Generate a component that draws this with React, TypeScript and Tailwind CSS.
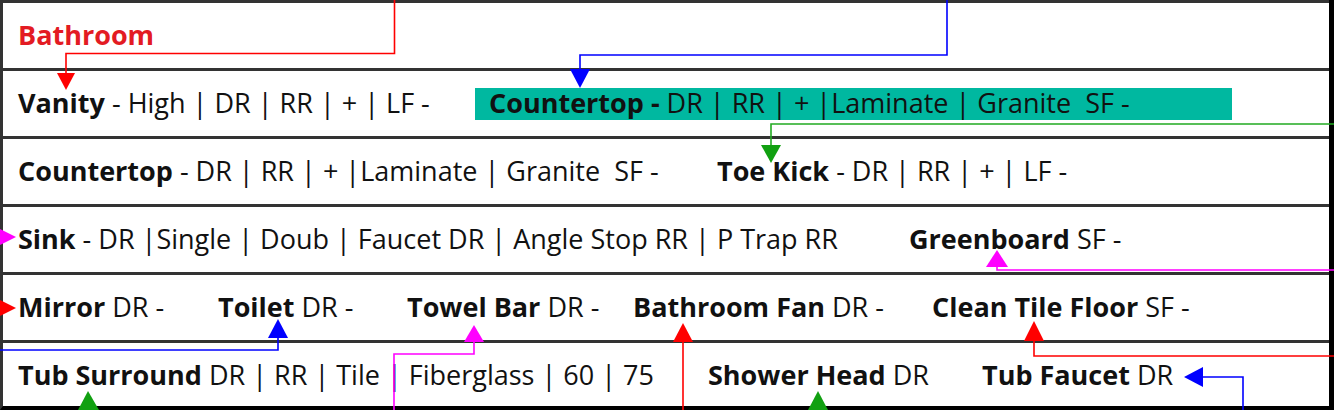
import type { ReactNode } from 'react'

const font = { fontFamily: '"Open Sans", "Noto Sans", sans-serif' }

function Row({ children }: { children: ReactNode }) {
  return <div className="flex h-[68px] items-center border-t-[3px] border-[#333] pl-[15px]">{children}</div>
}

function Item({ name, rest, width }: { name: string; rest?: string; width?: string }) {
  return (
    <div className={`shrink-0 whitespace-pre ${width ?? ''}`}>
      <span className="font-bold">{name}</span>
      {rest}
    </div>
  )
}

function Connectors() {
  return (
    <svg
      className="pointer-events-none absolute inset-0"
      width={1334}
      height={410}
      viewBox="0 0 1334 410"
      fill="none"
    >
      {/* bathroom -> vanity */}
      <path d="M394.5 0 V53.5 H66 V74" stroke="#ff0000" strokeWidth={1.6} />
      <polygon points="57,73 75,73 66,90" fill="#ff0000" />
      {/* countertop highlight */}
      <path d="M947 0 V55 H580 V70" stroke="#0000ff" strokeWidth={1.6} />
      <polygon points="570,69 590,69 580,88" fill="#0000ff" />
      {/* toe kick */}
      <path d="M1334 124 H771 V146" stroke="#22aa22" strokeWidth={1.6} />
      <polygon points="761,145 781,145 771,163" fill="#11a011" />
      {/* sink */}
      <polygon points="0,229 0,245 16,237" fill="#ff00ff" />
      {/* greenboard */}
      <path d="M1334 270 H997 V266" stroke="#ff00ff" strokeWidth={1.6} />
      <polygon points="986,267 1008,267 997,250" fill="#ff00ff" />
      {/* mirror */}
      <polygon points="0,300 0,316 16,308" fill="#ff0000" />
      {/* toilet */}
      <path d="M0 350 H278 V337" stroke="#0000ff" strokeWidth={1.6} />
      <polygon points="268,338 288,338 278,319" fill="#0000ff" />
      {/* towel bar */}
      <path d="M394 410 V354 H474 V341" stroke="#ff00ff" strokeWidth={1.6} />
      <polygon points="464,342 484,342 474,325" fill="#ff00ff" />
      {/* bathroom fan */}
      <path d="M683 410 V341" stroke="#ff0000" strokeWidth={1.6} />
      <polygon points="673,342 693,342 683,323" fill="#ff0000" />
      {/* tub surround */}
      <polygon points="78,410 99,410 88,391" fill="#11a011" />
      {/* shower head */}
      <polygon points="808,410 828,410 818,391" fill="#11a011" />
      {/* clean tile floor */}
      <path d="M1334 356 H1034 V341" stroke="#ff0000" strokeWidth={1.6} />
      <polygon points="1024,341 1044,341 1034,321" fill="#ff0000" />
      {/* tub faucet */}
      <path d="M1243 410 V377 H1202" stroke="#0000ff" strokeWidth={1.6} />
      <polygon points="1203,367 1203,387 1184,377" fill="#0000ff" />
    </svg>
  )
}

export default function App() {
  return (
    <div className="relative h-[410px] w-[1334px] overflow-hidden bg-white text-[27px] text-[#111]" style={font}>
      <div className="h-[410px] border-b-[4px] border-l-[3px] border-r-[5px] border-b-black border-l-[#333] border-r-black">
        <Row>
          <div className="font-bold text-[#e31b23]">Bathroom</div>
        </Row>

        <Row>
          <Item name="Vanity" rest=" - High | DR | RR | + | LF -" width="w-[457px]" />
          <div className="flex h-[32px] w-[757px] shrink-0 items-center whitespace-pre bg-[#00b8a0] pl-[14px]">
            <span className="font-bold">Countertop - </span>DR | RR | + |Laminate | Granite  SF -
          </div>
        </Row>

        <Row>
          <Item name="Countertop" rest=" - DR | RR | + |Laminate | Granite  SF -" width="w-[699px]" />
          <Item name="Toe Kick" rest=" - DR | RR | + | LF -" />
        </Row>

        <Row>
          <Item name="Sink" rest=" - DR |Single | Doub | Faucet DR | Angle Stop RR | P Trap RR" width="w-[891px]" />
          <Item name="Greenboard" rest=" SF -" />
        </Row>

        <Row>
          <Item name="Mirror" rest=" DR -" width="w-[200px]" />
          <Item name="Toilet" rest=" DR -" width="w-[189px]" />
          <Item name="Towel Bar" rest=" DR -" width="w-[226px]" />
          <Item name="Bathroom Fan" rest=" DR -" width="w-[299px]" />
          <Item name="Clean Tile Floor" rest=" SF -" />
        </Row>

        <Row>
          <Item name="Tub Surround" rest=" DR | RR | Tile | Fiberglass | 60 | 75" width="w-[690px]" />
          <Item name="Shower Head" rest=" DR" width="w-[274px]" />
          <Item name="Tub Faucet" rest=" DR" />
        </Row>
      </div>
      <Connectors />
    </div>
  )
}
